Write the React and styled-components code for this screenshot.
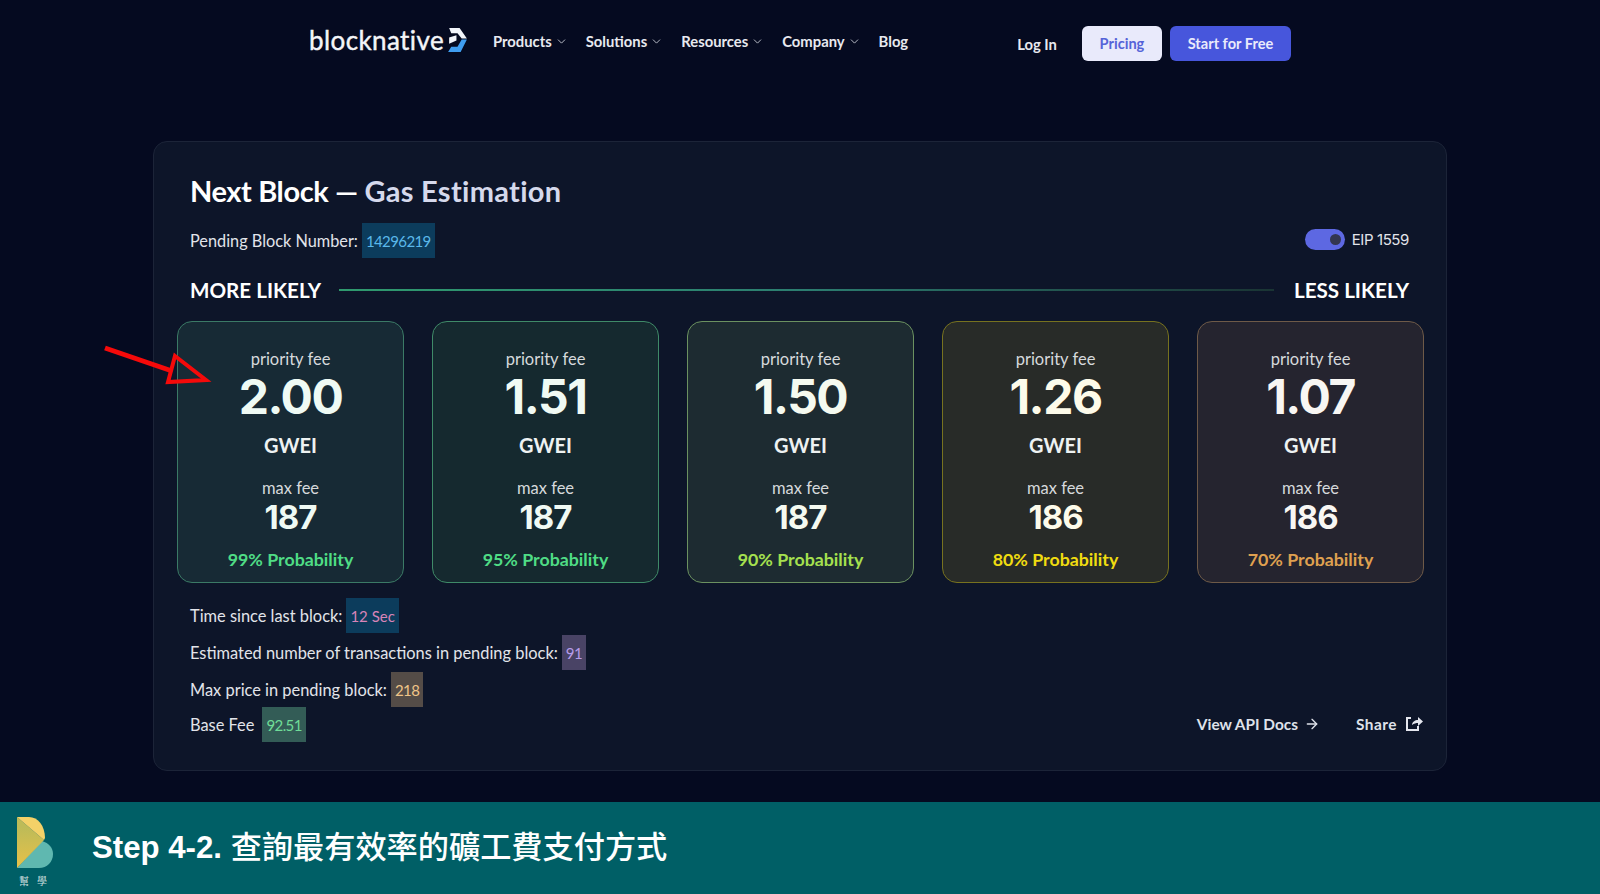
import React from "react";
import styled, { createGlobalStyle } from "styled-components";
import { ChevronDown, ArrowRight } from "lucide-react";

const GlobalStyle = createGlobalStyle`
  html, body {
    margin: 0;
    padding: 0;
    background: #050a20;
  }
  body {
    font-family: "Lato", "Noto Sans", sans-serif;
  }
`;

const Page = styled.div`
  position: relative;
  width: 1600px;
  height: 894px;
  overflow: hidden;
  display: flex;
  flex-direction: column;
  background: #050a20;
  color: #fff;
`;

const Nav = styled.header`
  height: 87px;
  padding: 26px 0 0 309px;
  box-sizing: border-box;
  display: flex;
  align-items: flex-start;
`;

const Logo = styled.div`
  width: 160px;
  height: 28px;
  display: flex;
  align-items: center;
  gap: 4px;
  font-size: 26px;
  line-height: 28px;
  letter-spacing: 0.4px;
  color: #f4f5f8;
  -webkit-text-stroke: 0.4px #f4f5f8;
`;

const NavLinks = styled.nav`
  display: flex;
  gap: 18px;
  margin-left: 24px;
  height: 30px;
  align-items: center;
`;

const NavLink = styled.a`
  display: flex;
  align-items: center;
  gap: 3px;
  font-size: 14.8px;
  font-weight: 700;
  color: #e8e9ef;
`;

const NavActions = styled.div`
  display: flex;
  align-items: center;
  margin-left: 109px;
  height: 35px;
`;

const LogIn = styled.a`
  font-size: 14.8px;
  font-weight: 700;
  color: #e8e9ef;
  margin-right: 25px;
`;

const NavButton = styled.button`
  height: 35px;
  width: ${(p) => p.$width}px;
  margin-right: 8px;
  border: 0;
  border-radius: 6px;
  font-family: inherit;
  font-size: 14.6px;
  font-weight: 700;
  background: ${(p) => (p.$primary ? "#4756dc" : "#e9eafb")};
  color: ${(p) => (p.$primary ? "#e9eafb" : "#5563d8")};
`;

const Panel = styled.section`
  width: 1294px;
  height: 630px;
  margin-left: 153px;
  margin-top: 54px;
  box-sizing: border-box;
  padding: 31px 23px 0 23px;
  background: #0d1529;
  border: 1px solid #1c2438;
  border-radius: 14px;
`;

const Indent = styled.div`
  padding: 0 14px 0 13px;
`;

const Title = styled.h1`
  margin: 0;
  font-size: 29px;
  line-height: 36px;
  font-weight: 700;
  letter-spacing: -0.4px;
  color: #fff;
  span {
    letter-spacing: 0.3px;
    color: #d5d9ec;
  }
`;

const PendingRow = styled.div`
  display: flex;
  align-items: center;
  justify-content: space-between;
  margin-top: 14px;
  height: 35px;
`;

const Stat = styled.div`
  display: flex;
  align-items: center;
  font-size: ${(p) => p.$size || 16.4}px;
  color: #e2e4ea;
  height: 35px;
  margin-bottom: ${(p) => p.$gap || 0}px;
`;

const Badge = styled.span`
  display: inline-flex;
  align-items: center;
  height: 35px;
  padding: 0 4px;
  margin-left: ${(p) => p.$offset || 4}px;
  background: ${(p) => p.$bg};
  color: ${(p) => p.$color};
  font-size: 15px;
  letter-spacing: ${(p) => (p.$digits ? "-0.6px" : "0")};
`;

const Eip = styled.div`
  display: flex;
  align-items: center;
  gap: 7px;
  margin-bottom: 3px;
  font-size: 15px;
  color: #e2e4ea;
  font-family: "Inter", sans-serif;
  letter-spacing: -0.4px;
`;

const Toggle = styled.div`
  width: 40px;
  height: 21px;
  border-radius: 11px;
  background: #5d68e2;
  display: flex;
  align-items: center;
  justify-content: flex-end;
  padding-right: 4px;
  box-sizing: border-box;
  &::after {
    content: "";
    width: 11px;
    height: 11px;
    border-radius: 50%;
    background: #33364f;
  }
`;

const LikelyRow = styled.div`
  display: flex;
  align-items: center;
  margin-top: 16px;
  height: 32px;
  font-size: 20.6px;
  font-weight: 700;
  color: #fff;
`;

const LikelyLine = styled.div`
  flex: 1;
  height: 2px;
  margin: 0 20px 0 18px;
  background: linear-gradient(90deg, #2f9a6e 0%, #2c7d70 50%, #1a3434 100%);
`;

const Cards = styled.div`
  display: grid;
  grid-template-columns: repeat(5, 227px);
  gap: 28px;
  margin-top: 15px;
`;

const Card = styled.div`
  height: 262px;
  box-sizing: border-box;
  padding-top: 27px;
  border-radius: 15px;
  border: 1px solid ${(p) => p.$border};
  background: ${(p) => p.$bg};
  display: flex;
  flex-direction: column;
  align-items: center;
`;

const FeeLabel = styled.div`
  font-size: 16.5px;
  line-height: 20px;
  color: #d6d9dc;
`;

const FeeValue = styled.div`
  font-size: 48px;
  line-height: 54px;
  margin-top: 1px;
  font-weight: 700;
  font-family: "Inter", sans-serif;
  letter-spacing: -1.5px;
  color: ${(p) => p.$tint};
`;

const Unit = styled.div`
  font-size: 20px;
  line-height: 26px;
  font-weight: 700;
  margin-top: 8px;
  color: #eef2f2;
`;

const MaxLabel = styled(FeeLabel)`
  margin-top: 20px;
`;

const MaxValue = styled.div`
  font-size: 33px;
  line-height: 36px;
  margin-top: 1px;
  font-weight: 700;
  font-family: "Inter", sans-serif;
  letter-spacing: -1px;
  color: ${(p) => p.$tint};
`;

const Probability = styled.div`
  margin-top: 13px;
  font-size: 17.8px;
  line-height: 22px;
  font-weight: 700;
  color: ${(p) => p.$color};
`;

const Stats = styled.div`
  position: relative;
  margin-top: 15px;
`;

const Links = styled.div`
  position: absolute;
  right: -14px;
  bottom: 1px;
  height: 35px;
  display: flex;
  align-items: center;
  gap: 36px;
  font-size: 15.4px;
  font-weight: 700;
  color: #dfe2ea;
`;

const LinkItem = styled.a`
  display: flex;
  align-items: center;
  gap: ${(p) => p.$gap}px;
  letter-spacing: ${(p) => p.$spacing || 0}px;
`;

const Footer = styled.footer`
  position: absolute;
  left: 0;
  right: 0;
  bottom: 0;
  height: 92px;
  background: #005f66;
  display: flex;
  align-items: center;
`;

const BrandMark = styled.div`
  width: 92px;
  align-self: flex-start;
  display: flex;
  flex-direction: column;
  align-items: flex-start;
  padding: 15px 0 0 17px;
  box-sizing: border-box;
`;

const BrandText = styled.div`
  font-family: "Noto Sans CJK TC", sans-serif;
  font-size: 10px;
  line-height: 12px;
  letter-spacing: 8px;
  color: #c9dcdc;
  margin-top: 6px;
  padding-left: 2px;
  white-space: nowrap;
`;

const FooterTitle = styled.div`
  font-family: "Liberation Sans", "Noto Sans CJK TC", sans-serif;
  font-size: 31.2px;
  line-height: 36px;
  font-weight: 700;
  color: #fff;
  span {
    font-weight: 500;
  }
`;

const FeeCards = [
  { fee: "2.00", max: "187", prob: "99%", color: "#4fdc85", border: "#3b7a66", bg: "#172a35", tint: "#effaf4" },
  { fee: "1.51", max: "187", prob: "95%", color: "#4fdc85", border: "#3f8a68", bg: "#15292f", tint: "#f0faf4" },
  { fee: "1.50", max: "187", prob: "90%", color: "#a5e04f", border: "#6b9160", bg: "#1d2b31", tint: "#f5faf0" },
  { fee: "1.26", max: "186", prob: "80%", color: "#f0dc10", border: "#77721f", bg: "#282b28", tint: "#fdfbea" },
  { fee: "1.07", max: "186", prob: "70%", color: "#dfa050", border: "#6e5a48", bg: "#25242f", tint: "#f8f6f3" },
];

const NavItem = ({ children }) => (
  <NavLink>
    {children}
    <ChevronDown size={13} strokeWidth={1.6} color="#d0d3dc" />
  </NavLink>
);

const BlocknativeMark = () => (
  <svg width="19" height="24" viewBox="0 0 18 23">
    <path d="M1 0H11L18 10H13L9 5H3z" fill="#f2f5fb" />
    <path d="M1 9L8 7V12L1 15z" fill="#f2f5fb" />
    <path d="M0 23H12L18 11H13L9 18H3z" fill="#3f9df0" />
  </svg>
);

const ShareIcon = () => (
  <svg width="18" height="17" viewBox="0 0 18 17" fill="none">
    <path d="M6 3H2v12h11v-4" stroke="#e4e6ee" strokeWidth="2" />
    <path d="M7 10c0-3 3-5 6-5V2l5 4.5L13 11V8c-2 0-4 .5-6 2z" fill="#e4e6ee" />
  </svg>
);

const RedArrow = styled.svg`
  position: absolute;
  left: 0;
  top: 0;
  pointer-events: none;
`;

const App = () => (
  <Page>
    <GlobalStyle />
    <Nav>
      <Logo>
        blocknative
        <BlocknativeMark />
      </Logo>
      <NavLinks>
        <NavItem>Products</NavItem>
        <NavItem>Solutions</NavItem>
        <NavItem>Resources</NavItem>
        <NavItem>Company</NavItem>
        <NavLink>Blog</NavLink>
      </NavLinks>
      <NavActions>
        <LogIn>Log In</LogIn>
        <NavButton $width={80}>Pricing</NavButton>
        <NavButton $width={121} $primary>
          Start for Free
        </NavButton>
      </NavActions>
    </Nav>
    <Panel>
      <Indent>
        <Title>
          Next Block — <span>Gas Estimation</span>
        </Title>
        <PendingRow>
          <Stat $size={16.3}>
            Pending Block Number:
            <Badge $digits $bg="#0c3c5c" $color="#5ab8ea">14296219</Badge>
          </Stat>
          <Eip>
            <Toggle />
            EIP 1559
          </Eip>
        </PendingRow>
        <LikelyRow>
          MORE LIKELY
          <LikelyLine />
          LESS LIKELY
        </LikelyRow>
      </Indent>
      <Cards>
        {FeeCards.map((card) => (
          <Card key={card.prob} $border={card.border} $bg={card.bg}>
            <FeeLabel>priority fee</FeeLabel>
            <FeeValue $tint={card.tint}>{card.fee}</FeeValue>
            <Unit>GWEI</Unit>
            <MaxLabel>max fee</MaxLabel>
            <MaxValue $tint={card.tint}>{card.max}</MaxValue>
            <Probability $color={card.color}>{card.prob} Probability</Probability>
          </Card>
        ))}
      </Cards>
      <Indent>
        <Stats>
          <Stat $gap={2}>
            Time since last block:
            <Badge $bg="#0c3c5c" $color="#d884b8">12 Sec</Badge>
          </Stat>
          <Stat $gap={2}>
            Estimated number of transactions in pending block:
            <Badge $digits $bg="#494365" $color="#b79cea">91</Badge>
          </Stat>
          <Stat>
            Max price in pending block:
            <Badge $digits $bg="#544c47" $color="#efc488">218</Badge>
          </Stat>
          <Stat>
            Base Fee
            <Badge $digits $offset={8} $bg="#335c56" $color="#6fdc98">92.51</Badge>
          </Stat>
          <Links>
            <LinkItem $gap={6}>
              View API Docs
              <ArrowRight size={16} strokeWidth={2} />
            </LinkItem>
            <LinkItem $gap={8} $spacing={0.5}>
              Share
              <ShareIcon />
            </LinkItem>
          </Links>
        </Stats>
      </Indent>
    </Panel>
    <RedArrow width="1600" height="894" viewBox="0 0 1600 894">
      <path d="M105 348L172 371" stroke="#f50a0a" strokeWidth="5" />
      <path d="M175 356L206 380L168 382Z" fill="none" stroke="#f50a0a" strokeWidth="4" />
    </RedArrow>
    <Footer>
      <BrandMark>
        <svg width="36" height="52" viewBox="0 0 36 52">
          <defs>
            <linearGradient id="markGold" x1="0" y1="0" x2="0" y2="1">
              <stop offset="0.2" stopColor="#bdbb58" />
              <stop offset="1" stopColor="#e8c148" />
            </linearGradient>
          </defs>
          <path d="M25 24C32 26 36 31 36 37C36 45 30 51 22 51H0Z" fill="#5fb8b0" />
          <path d="M0 0L27 23L0 51Z" fill="url(#markGold)" />
          <path d="M0 0H12C21 0 28 9 28 21L27 23Z" fill="#f4d168" />
        </svg>
        <BrandText>幫學</BrandText>
      </BrandMark>
      <FooterTitle>
        Step 4-2. <span>查詢最有效率的礦工費支付方式</span>
      </FooterTitle>
    </Footer>
  </Page>
);

export default App;
